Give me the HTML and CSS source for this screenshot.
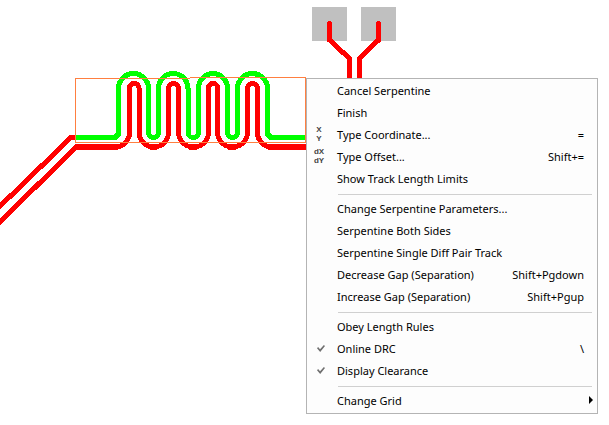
FILE: index.html
```html
<!DOCTYPE html>
<html lang="en">
<head>
    <meta charset="UTF-8">
    <meta name="viewport" content="width=device-width, initial-scale=1.0">
    <title>Serpentine</title>
    <link rel="stylesheet" href="styles.css">
</head>
<body>
    <div class="board">
        <svg class="layout" width="306" height="240" viewBox="0 0 306 240" shape-rendering="crispEdges" overflow="visible">
            <!-- Pads -->
            <path class="pad" d="M312 7h35v34h-35zM361 7h35v34h-35z"/>
            <path class="track round" d="M329.5 23.5V40L349.5 58.5V80"/>
            <path class="track round" d="M378.5 23.5V40L359.5 58.5V80"/>

            <!-- Diff pair -->
            <path class="track" d="M-5 211L71 137.5H76"/>
            <path class="track" d="M-5 227L76 147"/>
            <path class="track" d="M115 147A14.5 14.5 0 0 0 129.5 132.5V88A4.75 4.5 0 0 1 139 88V132.5A14.75 14.5 0 0 0 168.5 132.5V88A5 4.5 0 0 1 178.5 88V132.5A15 14.5 0 0 0 208.5 132.5V88A4.5 4.5 0 0 1 217.5 88V132.5A15 14.5 0 0 0 247.5 132.5V88A5 4.5 0 0 1 257.5 88V132.5A14.5 14.5 0 0 0 272 147"/>
            <path class="track wide" d="M75 147H118M150 147H157M189 147H197M228 147H236M268 147H306"/>
            <path class="track active" d="M76 137.5H115L118.5 134V88.5A15 15 0 0 1 148.5 88.5V132.5A5 5 0 0 0 158.5 132.5V88.5A14.75 15 0 0 1 188 88.5V132.5A5.25 5 0 0 0 198.5 132.5V88.5A14.5 15 0 0 1 227.5 88.5V132.5A5 5 0 0 0 237.5 132.5V88.5A15 15 0 0 1 267.5 88.5V134L271 137.5H306"/>

            <!-- Selection outline -->
            <path class="outline" d="M190 78.5H75.5V142.5H305.5V77.5H190"/>
        </svg>

        <div class="menu">
            <button class="item"><span class="icon"></span>Cancel Serpentine</button>
            <button class="item"><span class="icon"></span>Finish</button>
            <button class="item"><span class="icon">X<br>Y</span>Type Coordinate...<span class="key">=</span></button>
            <button class="item"><span class="icon">dX<br>dY</span>Type Offset...<span class="key">Shift+=</span></button>
            <button class="item"><span class="icon"></span>Show Track Length Limits</button>
            <hr>
            <button class="item"><span class="icon"></span>Change Serpentine Parameters...</button>
            <button class="item"><span class="icon"></span>Serpentine Both Sides</button>
            <button class="item"><span class="icon"></span>Serpentine Single Diff Pair Track</button>
            <button class="item"><span class="icon"></span>Decrease Gap (Separation)<span class="key">Shift+Pgdown</span></button>
            <button class="item"><span class="icon"></span>Increase Gap (Separation)<span class="key">Shift+Pgup</span></button>
            <hr>
            <label class="item"><span class="icon"><input type="checkbox"></span>Obey Length Rules</label>
            <label class="item"><span class="icon"><input type="checkbox" checked></span>Online DRC<span class="key">\</span></label>
            <label class="item"><span class="icon"><input type="checkbox" checked></span>Display Clearance</label>
            <hr>
            <button class="item submenu"><span class="icon"></span>Change Grid</button>
        </div>
    </div>
</body>
</html>
```
FILE: styles.css
```css
body {
    margin: 0;
    background: #fff;
    font-family: "Noto Sans", "Open Sans", sans-serif;
    font-size: 11px;
    color: #000;
}

.board {
    position: relative;
    min-height: 100vh;
    overflow: hidden;
}

.layout {
    display: block;
}

.pad {
    fill: #c0c0c0;
}

.track {
    fill: none;
    stroke: #f00;
    stroke-width: 5;
}

.wide {
    stroke-width: 6;
}

.round {
    stroke-linecap: round;
}

.active {
    stroke: #0f0;
}

.outline {
    fill: none;
    stroke: #ff7f40;
}

/* Context menu opened over the board */
.menu {
    position: absolute;
    top: 78px;
    left: 306px;
    width: 290px;
    padding: 1px 0;
    background: #fdfdfd;
    border: 1px solid #b4b4b4;
}

.item {
    display: flex;
    align-items: center;
    width: 100%;
    height: 22px;
    padding: 0 13px 2px 0;
    border: none;
    background: none;
    font: inherit;
    color: inherit;
    text-align: left;
    white-space: nowrap;
    box-sizing: border-box;
}

.item:hover {
    background: #e5e5e5;
}

.icon {
    width: 24px;
    margin-right: 6px;
    font-family: "Liberation Sans", Arial, sans-serif;
    font-size: 8px;
    font-weight: bold;
    line-height: 9px;
    text-align: center;
    color: #444;
}

.key {
    margin-left: auto;
}

.menu hr {
    height: 1px;
    margin: 4px 5px 3px 31px;
    border: none;
    background: #d0d0d0;
}

.item input {
    display: block;
    appearance: none;
    width: 8px;
    height: 7px;
    margin: 1px 0 0 10px;
}

.item input:checked {
    background: #707070;
    clip-path: polygon(0 45%, 14% 30%, 38% 62%, 86% 0, 100% 14%, 40% 100%);
}

.submenu {
    padding-right: 4px;
}

.submenu::after {
    content: "";
    margin-left: auto;
    border: 4px solid transparent;
    border-left-color: #000;
    border-right: none;
}
```
